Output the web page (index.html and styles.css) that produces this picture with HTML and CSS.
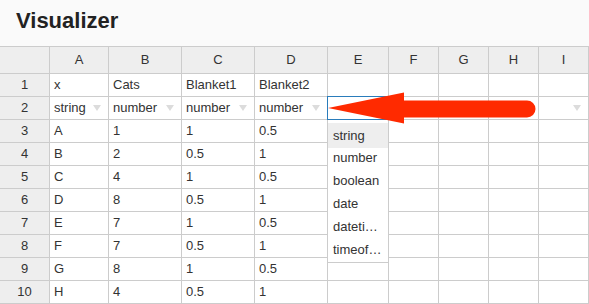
FILE: index.html
```html
<!DOCTYPE html>
<html>
<head>
<meta charset="utf-8">
<link rel="stylesheet" href="styles.css">
</head>
<body>
<div class="app">
  <header class="topbar"><h1 class="title">Visualizer</h1></header>
  <table class="sheet">
    <colgroup>
      <col class="c-rh"><col class="c-a"><col class="c-b"><col class="c-c"><col class="c-d"><col class="c-e"><col class="c-s"><col class="c-s"><col class="c-s"><col class="c-s">
    </colgroup>
    <thead>
      <tr><th class="corner"></th><th>A</th><th>B</th><th>C</th><th>D</th><th>E</th><th>F</th><th>G</th><th>H</th><th>I</th></tr>
    </thead>
    <tbody>
      <tr><th>1</th><td>x</td><td>Cats</td><td>Blanket1</td><td>Blanket2</td><td></td><td></td><td></td><td></td><td></td></tr>
      <tr class="types"><th>2</th>
        <td><div class="typecell"><span>string</span><i class="tri"></i></div></td>
        <td><div class="typecell"><span>number</span><i class="tri"></i></div></td>
        <td><div class="typecell"><span>number</span><i class="tri"></i></div></td>
        <td><div class="typecell"><span>number</span><i class="tri"></i></div></td>
        <td class="active">
          <div class="typecell"><span></span><i class="tri"></i></div>
          <div class="sel"></div>
          <ul class="menu">
            <li class="hl">string</li>
            <li>number</li>
            <li>boolean</li>
            <li>date</li>
            <li>dateti…</li>
            <li>timeof…</li>
          </ul>
        </td>
        <td><div class="typecell"><span></span><i class="tri"></i></div></td>
        <td><div class="typecell"><span></span><i class="tri"></i></div></td>
        <td><div class="typecell"><span></span><i class="tri"></i></div></td>
        <td><div class="typecell"><span></span><i class="tri"></i></div></td>
      </tr>
      <tr><th>3</th><td>A</td><td>1</td><td>1</td><td>0.5</td><td></td><td></td><td></td><td></td><td></td></tr>
      <tr><th>4</th><td>B</td><td>2</td><td>0.5</td><td>1</td><td></td><td></td><td></td><td></td><td></td></tr>
      <tr><th>5</th><td>C</td><td>4</td><td>1</td><td>0.5</td><td></td><td></td><td></td><td></td><td></td></tr>
      <tr><th>6</th><td>D</td><td>8</td><td>0.5</td><td>1</td><td></td><td></td><td></td><td></td><td></td></tr>
      <tr><th>7</th><td>E</td><td>7</td><td>1</td><td>0.5</td><td></td><td></td><td></td><td></td><td></td></tr>
      <tr><th>8</th><td>F</td><td>7</td><td>0.5</td><td>1</td><td></td><td></td><td></td><td></td><td></td></tr>
      <tr><th>9</th><td>G</td><td>8</td><td>1</td><td>0.5</td><td></td><td></td><td></td><td></td><td></td></tr>
      <tr><th>10</th><td>H</td><td>4</td><td>0.5</td><td>1</td><td></td><td></td><td></td><td></td><td></td></tr>
    </tbody>
  </table>
  <svg class="arrow" width="589" height="304" viewBox="0 0 589 304" aria-hidden="true">
    <path d="M328 108 L404 92.5 L404 100.5 L527 100.5 A8.5 8.5 0 0 1 527 117.5 L404 117.5 L404 123.5 Z" fill="#ff2a00"/>
  </svg>
</div>
</body>
</html>
```
FILE: styles.css
```css
* { box-sizing: border-box; }
html, body { margin: 0; padding: 0; background: #fff; }
body {
  font-family: "Liberation Sans", Arial, Helvetica, sans-serif;
  color: #333;
  width: 589px;
  height: 304px;
  overflow: hidden;
}
.app { position: relative; width: 589px; height: 304px; }
.topbar {
  height: 46px;
  background: #fafafa;
  padding: 8px 0 0 16px;
}
.title {
  margin: 0;
  font-size: 22px;
  line-height: 26px;
  font-weight: bold;
  color: #222;
}
.sheet {
  border-collapse: separate;
  border-spacing: 0;
  table-layout: fixed;
  width: 589px;
  border-top: 1px solid #ccc;
  font-size: 13px;
}
.c-rh { width: 50px; }
.c-a { width: 59px; }
.c-b, .c-c, .c-d { width: 73px; }
.c-e { width: 61px; }
.c-s { width: 50px; }
.sheet th, .sheet td {
  border-right: 1px solid #ccc;
  border-bottom: 1px solid #ccc;
  padding: 0 0 0 4px;
  height: 23px;
  line-height: 22px;
  white-space: nowrap;
  overflow: visible;
  text-align: left;
  font-weight: normal;
  color: #333;
}
.sheet thead th {
  height: 27px;
  line-height: 26px;
  background: #eee;
  text-align: center;
  padding: 0;
}
.sheet tbody th {
  background: #eee;
  text-align: center;
  padding: 0;
}
.typecell {
  display: flex;
  align-items: center;
  justify-content: space-between;
  padding-right: 7px;
  height: 22px;
}
.tri {
  display: block;
  width: 0;
  height: 0;
  border-left: 4px solid transparent;
  border-right: 4px solid transparent;
  border-top: 6px solid #dcdcdc;
}
.active { position: relative; }
.sel {
  position: absolute;
  left: -1px;
  right: -1px;
  top: -1px;
  bottom: -1px;
  border: 1px solid #2a7cbb;
  z-index: 2;
}
.menu {
  position: absolute;
  left: -1px;
  top: 23px;
  width: 62px;
  margin: 0;
  padding: 3px 0 1px;
  list-style: none;
  background: #fff;
  border: 1px solid #ccc;
  border-top: none;
  z-index: 3;
}
.menu li {
  height: 23px;
  line-height: 24px;
  padding-left: 5px;
  color: #333;
}
.menu li.hl { background: #eee; height: 25px; line-height: 26px; margin-bottom: -2px; }
.arrow {
  position: absolute;
  left: 0;
  top: 0;
  pointer-events: none;
  z-index: 5;
}
```
